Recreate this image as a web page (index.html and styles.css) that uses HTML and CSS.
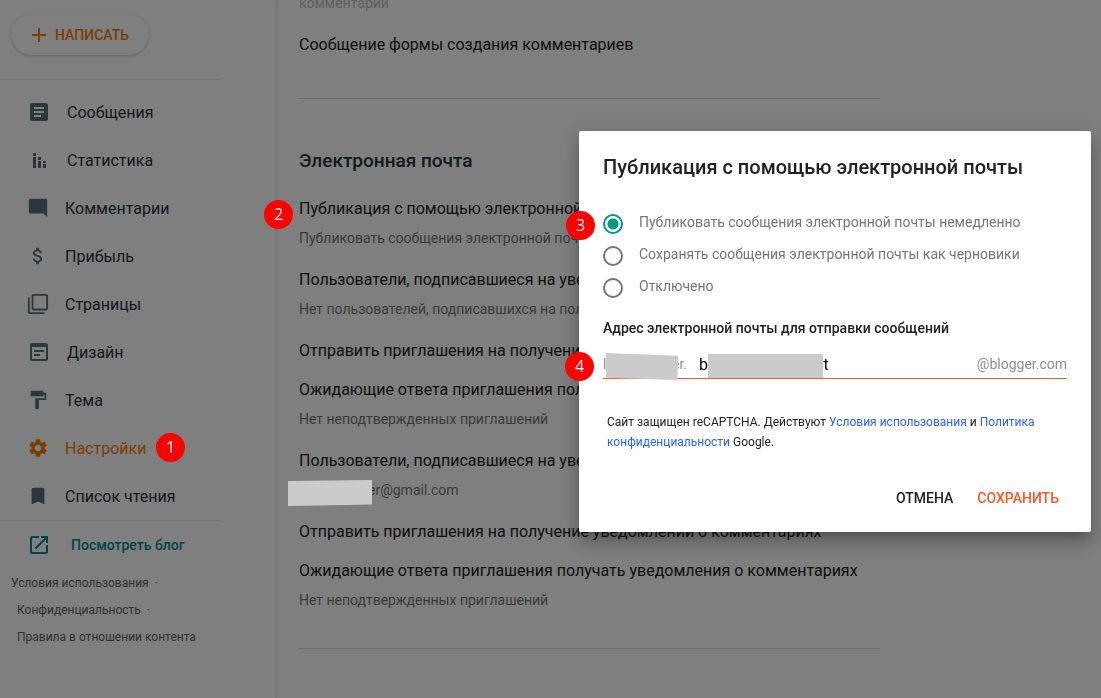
FILE: index.html
```html
<!DOCTYPE html>
<html lang="ru">
<head>
<meta charset="utf-8">
<title>Blogger – Настройки</title>
<link rel="stylesheet" href="styles.css">
</head>
<body>
<div class="app">
  <aside class="sidebar">
    <button class="compose" type="button">
      <svg class="compose-icon" viewBox="0 0 14 14" aria-hidden="true"><path d="M6 0h2v6h6v2H8v6H6V8H0V6h6z"/></svg>
      Написать
    </button>
    <nav class="nav">
      <a class="nav-item" href="#"><svg class="icon" viewBox="0 0 24 24"><path d="M19 3H5c-1.1 0-2 .9-2 2v14c0 1.1.9 2 2 2h14c1.1 0 2-.9 2-2V5c0-1.1-.9-2-2-2zm-5 14H7v-2h7v2zm3-4H7v-2h10v2zm0-4H7V7h10v2z"/></svg>Сообщения</a>
      <a class="nav-item" href="#"><svg class="icon" viewBox="0 0 24 24"><path d="M6 5h3v3H6zM6 9h3v11H6zM11 9h3v3h-3zM11 13h3v7h-3zM16 13h3v2h-3zM16 16h3v4h-3z"/></svg>Статистика</a>
      <a class="nav-item" href="#"><svg class="icon icon-small" viewBox="0 0 24 24"><path d="M22 4c0-1.100-.890-2-1.990-2H4c-1.100 0-2 .9-2 2v12c0 1.100.9 2 2 2h14l4 4V4z"/></svg>Комментарии</a>
      <a class="nav-item" href="#"><svg class="icon icon-small" viewBox="0 0 24 24"><path d="M11.800 10.900c-2.270-.590-3-1.200-3-2.150 0-1.090 1.010-1.850 2.700-1.850 1.780 0 2.440.850 2.500 2.100h2.210c-.070-1.720-1.120-3.300-3.210-3.810V3h-3v2.160c-1.940.420-3.500 1.680-3.500 3.610 0 2.310 1.910 3.460 4.700 4.130 2.500.600 3 1.480 3 2.410 0 .690-.490 1.790-2.700 1.790-2.060 0-2.870-.920-2.980-2.100h-2.200c.120 2.190 1.760 3.420 3.680 3.830V21h3v-2.150c1.950-.370 3.500-1.500 3.500-3.550 0-2.840-2.430-3.810-4.700-4.400z"/></svg>Прибыль</a>
      <a class="nav-item" href="#"><svg class="icon icon-small" viewBox="0 0 24 24"><path d="M3 5H1v16c0 1.100.9 2 2 2h16v-2H3V5zm18-4H7c-1.100 0-2 .9-2 2v14c0 1.100.9 2 2 2h14c1.100 0 2-.9 2-2V3c0-1.100-.9-2-2-2zm0 16H7V3h14v14z"/></svg>Страницы</a>
      <a class="nav-item" href="#"><svg class="icon" viewBox="0 0 24 24"><path d="M19 3H5c-1.100 0-2 .9-2 2v14c0 1.100.9 2 2 2h14c1.100 0 2-.9 2-2V5c0-1.100-.9-2-2-2zm0 16H5V7h14v12zM7 10h10v2H7zM7 14h6v2H7z"/></svg>Дизайн</a>
      <a class="nav-item" href="#"><svg class="icon icon-small" viewBox="0 0 24 24"><path d="M18 4V3c0-.550-.450-1-1-1H5c-.550 0-1 .450-1 1v4c0 .550.450 1 1 1h12c.550 0 1-.450 1-1V6h1v4H9v11c0 .550.450 1 1 1h2c.550 0 1-.450 1-1v-9h8V4h-3z"/></svg>Тема</a>
      <a class="nav-item nav-item-active" href="#"><svg class="icon icon-small" viewBox="0 0 24 24"><path d="M19.140 12.940c.040-.300.060-.610.060-.940 0-.320-.020-.640-.070-.940l2.030-1.580c.180-.140.230-.410.120-.610l-1.920-3.320c-.120-.220-.370-.290-.590-.220l-2.390.960c-.500-.380-1.030-.700-1.620-.940l-.360-2.540c-.040-.240-.240-.410-.480-.410h-3.840c-.240 0-.430.170-.470.410l-.360 2.540c-.590.240-1.130.570-1.620.940l-2.390-.960c-.220-.080-.470 0-.590.220L2.740 8.870c-.120.210-.080.470.120.610l2.030 1.580c-.050.300-.090.630-.090.940s.020.640.070.940l-2.030 1.580c-.180.140-.230.410-.120.610l1.920 3.320c.120.220.370.290.590.220l2.390-.960c.500.380 1.030.700 1.620.940l.360 2.540c.050.240.240.410.480.410h3.840c.240 0 .440-.170.470-.410l.360-2.540c.590-.240 1.130-.560 1.620-.940l2.390.960c.220.080.470 0 .590-.220l1.920-3.320c.120-.220.070-.470-.120-.610l-2.010-1.580zM12 15.600c-1.980 0-3.600-1.620-3.600-3.600s1.620-3.600 3.600-3.600 3.600 1.620 3.600 3.600-1.620 3.600-3.600 3.600z"/></svg>Настройки<span class="badge badge-nav">1</span></a>
      <a class="nav-item" href="#"><svg class="icon icon-small" viewBox="0 0 24 24"><path d="M17 3H7c-1.100 0-2 .9-2 2v16l7-3 7 3V5c0-1.100-.9-2-2-2z"/></svg>Список чтения</a>
    </nav>
    <a class="view-blog" href="#"><svg class="icon" viewBox="0 0 24 24"><path d="M19 19H5V5h7V3H5c-1.110 0-2 .9-2 2v14c0 1.100.890 2 2 2h14c1.100 0 2-.9 2-2v-7h-2v7zM14 3v2h3.590l-9.830 9.830 1.410 1.410L19 6.410V10h2V3h-7z"/></svg>Посмотреть блог</a>
    <ul class="legal">
      <li class="legal-item legal-first"><a href="#">Условия использования</a><span class="dot">·</span></li>
      <li class="legal-item"><a href="#">Конфиденциальность</a><span class="dot">·</span></li>
      <li class="legal-item"><a href="#">Правила в отношении контента</a></li>
    </ul>
  </aside>

  <main class="content">
    <section class="group group-comments">
      <p class="value value-disabled">комментарии</p>
      <h3 class="name">Сообщение формы создания комментариев</h3>
    </section>
    <section class="group group-mail">
      <h2 class="heading">Электронная почта</h2>
      <div class="settings">
        <div class="setting">
          <span class="badge badge-setting">2</span>
          <h3 class="name">Публикация с помощью электронной почты</h3>
          <p class="value">Публиковать сообщения электронной почты немедленно</p>
        </div>
        <div class="setting">
          <h3 class="name">Пользователи, подписавшиеся на уведомления о комментариях</h3>
          <p class="value">Нет пользователей, подписавшихся на получение уведомлений</p>
        </div>
        <div class="setting"><h3 class="name">Отправить приглашения на получение уведомлений</h3></div>
        <div class="setting">
          <h3 class="name">Ожидающие ответа приглашения получать уведомления</h3>
          <p class="value">Нет неподтвержденных приглашений</p>
        </div>
        <div class="setting">
          <h3 class="name">Пользователи, подписавшиеся на уведомления о сообщениях</h3>
          <p class="value value-mail"><span class="patch patch-mail"></span>er@gmail.com</p>
        </div>
        <div class="setting"><h3 class="name">Отправить приглашения на получение уведомлений о комментариях</h3></div>
        <div class="setting">
          <h3 class="name">Ожидающие ответа приглашения получать уведомления о комментариях</h3>
          <p class="value">Нет неподтвержденных приглашений</p>
        </div>
      </div>
    </section>
  </main>
</div>

<div class="scrim">
  <form class="dialog" role="dialog" aria-labelledby="dialog-title">
    <h2 class="dialog-title" id="dialog-title">Публикация с помощью электронной почты</h2>
    <div class="options">
      <span class="badge badge-options">3</span>
      <label class="option"><input class="radio" type="radio" name="mode" checked>Публиковать сообщения электронной почты немедленно</label>
      <label class="option"><input class="radio" type="radio" name="mode">Сохранять сообщения электронной почты как черновики</label>
      <label class="option"><input class="radio" type="radio" name="mode">Отключено</label>
    </div>
    <label class="field-label" for="address">Адрес электронной почты для отправки сообщений</label>
    <div class="field">
      <span class="badge badge-field">4</span>
      <span class="prefix"><span>l</span><span>er.</span></span>
      <input class="address" id="address" type="text" value="b&nbsp;&nbsp;&nbsp;&nbsp;&nbsp;&nbsp;&nbsp;&nbsp;&nbsp;&nbsp;&nbsp;&nbsp;&nbsp;&nbsp;&nbsp;&nbsp;&nbsp;&nbsp;&nbsp;&nbsp;&nbsp;&nbsp;&nbsp;&nbsp;&nbsp;&nbsp;&nbsp;st">
      <span class="domain">@blogger.com</span>
      <span class="patch patch-prefix"></span>
      <span class="patch patch-address"></span>
    </div>
    <p class="terms">Сайт защищен reCAPTCHA. Действуют <a href="#">Условия использования</a> и <a href="#">Политика конфиденциальности</a> Google.</p>
    <div class="actions">
      <button class="action" type="button">Отмена</button>
      <button class="action action-primary" type="submit">Сохранить</button>
    </div>
  </form>
</div>
</body>
</html>
```
FILE: styles.css
```css
* { box-sizing: border-box; }
body {
  margin: 0;
  height: 100vh;
  overflow: hidden;
  background: #fff;
  color: #212121;
  font-family: Roboto, "Liberation Sans", sans-serif;
  font-size: 14px;
}
h2, h3, p, ul { margin: 0; padding: 0; }
a { color: inherit; text-decoration: none; }
button { font: inherit; border: 0; background: none; cursor: pointer; }

.app { display: flex; min-height: 100vh; }

/* Sidebar */
.sidebar {
  flex: none;
  width: 276px;
  padding-top: 14px;
  border-right: 1px solid #efefef;
  box-shadow: 1px 0 4px rgba(0, 0, 0, .1);
}
.compose {
  display: flex;
  align-items: center;
  gap: 9px;
  height: 41px;
  margin: 0 0 24px 11px;
  padding: 0 20px 0 21px;
  border-radius: 21px;
  box-shadow: 0 1px 3px rgba(0, 0, 0, .25);
  color: #f57c00;
  font-weight: 500;
  text-transform: uppercase;
}
.compose-icon { width: 14px; height: 14px; fill: currentColor; }
.nav {
  width: 220px;
  padding-top: 8px;
  border-top: 1px solid #e4e4e4;
  border-bottom: 1px solid #e4e4e4;
}
.nav-item {
  position: relative;
  display: flex;
  align-items: center;
  gap: 16px;
  height: 48px;
  padding-left: 27px;
  color: #263238;
  font-size: 16px;
}
.nav-item-active { color: #f57c00; }
.icon { flex: none; width: 24px; height: 24px; fill: #546e7a; }
.icon-small { width: 22px; height: 22px; }
.nav-item-active .icon { fill: currentColor; }
.view-blog {
  display: flex;
  align-items: center;
  gap: 20px;
  height: 48px;
  padding-left: 27px;
  color: #008c90;
  font-weight: 500;
}
.view-blog .icon { fill: currentColor; }
.legal {
  padding: 1px 0 0 17px;
  color: #616161;
  font-size: 12px;
  line-height: 27px;
  list-style: none;
}
.legal-first { margin-left: -6px; }
.dot { padding-left: 6px; }

/* Settings list */
.content {
  flex: 1;
  min-width: 0;
  max-width: 604px;
  padding-left: 23px;
  white-space: nowrap;
}
.group { border-bottom: 1px solid #dadada; }
.group-comments {
  display: grid;
  gap: 19px;
  margin-top: -7px;
  padding-bottom: 40px;
}
.group-mail { padding: 50px 0 32px; }
.heading {
  margin-bottom: 23px;
  color: #263238;
  font-size: 19px;
  font-weight: 500;
  line-height: 24px;
}
.settings { display: grid; gap: 13px; }
.setting { position: relative; }
.name { font-size: 16px; font-weight: 400; line-height: 26px; }
.value { color: #757575; line-height: 20px; }
.value-disabled { color: #bdbdbd; }
.setting .value { margin: 6px 0; }
.value-mail { position: relative; padding-left: 69px; }

/* Numbered callouts and masks */
.badge {
  position: absolute;
  z-index: 20;
  width: 29px;
  height: 29px;
  border-radius: 50%;
  background: #f00;
  color: #fff;
  font-family: "Open Sans", sans-serif;
  font-size: 16px;
  font-weight: 400;
  line-height: 28px;
  text-align: center;
}
.badge-nav { left: 156px; top: 9px; }
.badge-setting { left: -35px; top: 4px; }
.badge-options { left: -37px; top: 1px; }
.badge-field { left: -38px; top: 2px; }
.patch { position: absolute; z-index: 20; background: #cbcbcb; }
.patch-mail {
  left: -11px;
  top: 0;
  width: 84px;
  height: 26px;
  clip-path: polygon(0 4%, 100% 0, 100% 94%, 0 100%);
}
.patch-prefix {
  left: 3px;
  top: 3px;
  width: 72px;
  height: 27px;
  clip-path: polygon(0 0, 100% 10%, 99% 100%, 0 92%);
}
.patch-address { left: 105px; top: 4px; width: 115px; height: 24px; }

/* Dialog */
.scrim {
  position: fixed;
  inset: 0;
  z-index: 10;
  display: flex;
  justify-content: flex-end;
  align-items: flex-start;
  padding: 131px 10px 0;
  background: rgba(0, 0, 0, .5);
}
.dialog {
  width: 512px;
  max-width: 100%;
  padding: 24px 24px 16px;
  border-radius: 2px;
  background: #fff;
  box-shadow: 0 12px 17px 2px rgba(0, 0, 0, .14), 0 5px 22px 4px rgba(0, 0, 0, .12), 0 7px 8px -4px rgba(0, 0, 0, .2);
}
.dialog-title { font-size: 20px; font-weight: 500; line-height: 24px; }
.options { position: relative; margin-top: 31px; }
.option {
  display: flex;
  gap: 16px;
  height: 32px;
  color: #757575;
  line-height: 24px;
}
.radio {
  appearance: none;
  flex: none;
  width: 20px;
  height: 20px;
  margin: 4px 0 0;
  border: 2px solid #757575;
  border-radius: 50%;
}
.radio:checked {
  border-color: #009688;
  background: radial-gradient(circle, #009688 5px, transparent 6px);
}
.field-label { display: block; margin-top: 10px; font-weight: 500; line-height: 24px; }
.field {
  position: relative;
  display: flex;
  align-items: center;
  height: 29px;
  margin-top: 10px;
  border-bottom: 1px solid #ff5722;
  color: #8e8e8e;
}
.prefix { display: flex; justify-content: space-between; width: 84px; margin-right: 12px; }
.address {
  flex: 1;
  min-width: 0;
  padding: 0;
  border: 0;
  outline: 0;
  background: none;
  color: #000;
  font: inherit;
  font-size: 16px;
}
.terms { margin-top: 33px; padding: 0 4px; font-size: 12px; line-height: 20px; }
.terms a { color: #2962ff; }
.actions { display: flex; justify-content: flex-end; gap: 8px; margin-top: 28px; }
.action {
  height: 36px;
  padding: 0 8px;
  color: #212121;
  font-weight: 500;
  text-transform: uppercase;
}
.action-primary { color: #ff5722; }
```
